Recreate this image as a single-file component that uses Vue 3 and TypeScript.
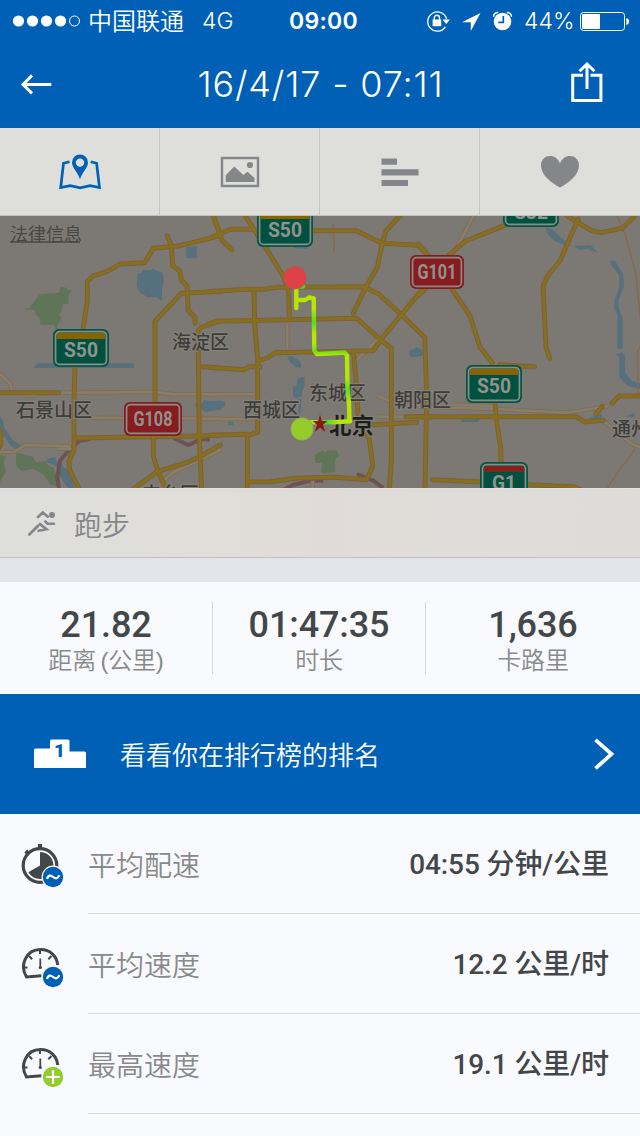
<script setup lang="ts">
type Tile = 0 | 210 | 420
interface Line { tile: Tile; pts: string }
interface Shield { x: number; y: number; w: number; h: number; text: string; kind: 'g' | 'r'; band?: string; size: number }

// Map geometry is digitised per tile at 3 units per pixel.
const trace = (line: Line): string =>
  'M' + line.pts.split(' ').map((p) => {
    const [x, y] = p.split(',').map(Number)
    return `${(x / 3 + line.tile).toFixed(1)} ${(y / 3 + 214).toFixed(1)}`
  }).join('L')

const L = (tile: Tile, ...pts: string[]): string[] => pts.map((p) => trace({ tile, pts: p }))

const majors: string[] = [
  ...L(0,
    '240,830 209,768 207,740 222,708 222,560 225,450 248,350 262,262 262,202 278,187 322,172 360,150 434,146 460,103 540,95 662,65',
    '502,65 514,95 518,155 540,172 544,198 561,216 565,290 585,310 585,328',
    '638,0 662,65',
    '465,560 465,322 544,238 662,232',
    '605,830 598,668 594,350 604,340 662,320',
    '608,458 662,463',
    '-5,536 176,536',
    '225,672 598,666 662,664',
    '460,668 460,725 474,772 495,820',
    '390,832 474,772 560,746 600,728 662,692',
    '-5,640 2,660 2,690 -5,705'),
  ...L(210,
    '-5,74 62,46 130,46', '12,10 35,78 66,108', '105,5 165,98 222,190 236,235 238,310',
    '300,50 440,50 516,88 625,94 665,135',
    '575,0 528,50 516,90 502,160 466,222 430,298',
    '-5,233 110,226 160,226 200,220 460,218 506,240 574,302 644,370 650,540 645,830',
    '-5,330 20,322 440,313 512,378 544,402 544,740 538,830',
    '132,235 134,330 143,440 143,655 112,665 112,830',
    '143,440 172,432 195,416 490,410 512,378 574,302 640,225',
    '-5,460 102,467 118,458 150,458',
    '-5,664 112,661', '430,413 438,500 444,600',
    '112,804 180,803 265,792 375,790 470,797 488,755 478,675 465,655',
    '488,632 620,625', '588,608 665,608'),
  ...L(420,
    '85,125 135,82 270,28', '95,225 150,305 180,400 218,448',
    '440,5 515,50 545,56 608,42 645,5',
    '475,15 420,140 385,182 369,217 378,400 389,433',
    '-5,90 18,115', '-5,245 15,225', '238,452 344,458',
    '-5,608 470,608 492,624 550,619', '224,560 230,625 242,700 243,750',
    '38,797 185,804', '320,812 460,818 490,830',
    '528,600 547,577', '576,568 597,546 662,546'),
]

const minors: string[] = [
  ...L(0, '176,536 465,534 520,541 662,541', '270,611 662,614', '-5,476 30,508 35,530', '-5,714 45,713 77,693 212,697', '172,704 215,704', '475,812 520,775 600,738 662,707', '75,544 105,544'),
  ...L(210, '-5,541 132,541', '-5,615 140,615', '232,330 232,405', '440,438 555,325 630,230', '502,545 555,568 665,580', '500,608 590,608', '0,715 30,700', '308,800 308,830'),
  ...L(420, '163,0 135,55 95,125', '-5,578 210,584 440,596 565,577', '100,572 230,577', '550,620 605,665 635,690 662,700'),
]
const thin: string[] = L(210, '370,30 373,115').concat(L(420,
  '590,5 615,60 648,180 662,320', '662,395 652,415 654,540', '560,825 590,780 645,705'))

const rail: string[] = [
  ...L(0, '178,830 172,790 180,740 210,705 240,680 270,675', '520,672 565,693 605,675 630,677'),
  ...L(210, '220,828 250,812 300,800 340,800', '440,780 490,800 520,822'),
]

const water: string[] = [
  ...L(0, '558,100 590,97 590,133 560,133', '412,180 426,177 428,168 456,168 460,161 465,168 490,177 491,208 486,223 486,262 470,250 440,250 432,242 420,236 410,215',
    '101,462 113,448 403,448 403,462', '0,607 10,620 12,640 40,680 62,692 50,707 30,693 18,675 0,660',
    '137,744 145,733 166,730 170,745 185,744 190,758 205,770 220,805 225,825 205,822 195,810 178,785 175,765 160,752',
    '586,568 605,568 612,558 630,562 662,560 662,580 640,590 615,594 600,582 586,580'),
  ...L(210, '231,428 245,427 265,438 274,450 272,462 255,458 238,442', '262,492 284,488 284,515 276,530 276,545 262,555 250,548 248,518 260,515',
    '0,560 45,562 45,575 28,588 0,590', '254,96 294,96 292,104 254,103', '596,410 610,406 620,398 640,410 638,425 610,430 600,428', '54,622 70,622 70,634 54,634', '265,555 275,555 272,590 266,610'),
  ...L(420, '378,40 395,45 425,72 455,95 440,97 405,82 380,58', '462,95 512,94 535,117 502,105 475,107',
    '569,142 585,140 610,180 612,218 595,260 597,283 608,312 608,405 592,405 592,300 582,285 583,260 598,220 597,182 578,160',
    '588,420 605,415 616,425 615,475 635,500 660,508 660,525 625,517 598,490 598,430', '-5,407 10,407 10,421 -5,421',
    '122,617 180,615 174,624 125,624', '508,612 546,600 545,615 510,617', '614,608 643,597 644,610'),
]
const parks: string[] = [
  ...L(0, '73,286 90,280 118,242 150,238 178,236 181,218 202,222 204,230 216,228 205,245 206,270 190,270 184,294 175,302 187,310 178,322 170,340 180,347 172,355 162,333 122,333 118,308 108,305 105,288',
    '48,716 68,720 98,728 108,745 136,742 145,755 160,760 170,785 178,820 150,810 130,782 100,765 65,770 48,755', '0,722 18,728 10,745 18,770 0,805'),
  ...L(210, '315,722 335,710 348,714 352,708 380,710 388,725 376,735 376,775 334,777 336,748 315,746'),
]

const shields: Shield[] = [
  { x: 257, y: 209, w: 56, h: 38, text: 'S50', kind: 'g', band: '#8a6200', size: 20 },
  { x: 53, y: 329, w: 56, h: 38, text: 'S50', kind: 'g', band: '#8a6200', size: 20 },
  { x: 466, y: 365, w: 56, h: 38, text: 'S50', kind: 'g', band: '#8a6200', size: 20 },
  { x: 503, y: 191, w: 56, h: 36, text: 'S32', kind: 'g', size: 20 },
  { x: 480, y: 462, w: 48, h: 38, text: 'G1', kind: 'g', band: '#84211f', size: 20 },
  { x: 410, y: 255, w: 54, h: 34, text: 'G101', kind: 'r', size: 20 },
  { x: 124, y: 402, w: 58, h: 34, text: 'G108', kind: 'r', size: 20 },
]
const places = [
  { x: 172, y: 349, t: '海淀区' }, { x: 16, y: 417, t: '石景山区' }, { x: 243, y: 417, t: '西城区' },
  { x: 309, y: 400, t: '东城区' }, { x: 394, y: 407, t: '朝阳区' }, { x: 612, y: 436, t: '通州区' }, { x: 142, y: 501, t: '丰台区' },
]

const stats = [
  { value: '21.82', label: '距离 (公里)' },
  { value: '01:47:35', label: '时长' },
  { value: '1,636', label: '卡路里' },
]
const rows = [
  { icon: 'watch', badge: 'avg', label: '平均配速', value: '04:55 分钟/公里' },
  { icon: 'gauge', badge: 'avg', label: '平均速度', value: '12.2 公里/时' },
  { icon: 'gauge', badge: 'max', label: '最高速度', value: '19.1 公里/时' },
]
</script>

<template>
  <div class="app">
    <header class="top">
      <div class="status">
        <div class="left">
          <svg class="dots" width="70" height="14" viewBox="0 0 70 14">
            <g fill="#fff"><circle cx="6.5" cy="7" r="5.6" /><circle cx="20.5" cy="7" r="5.6" /><circle cx="34.5" cy="7" r="5.6" /><circle cx="48.5" cy="7" r="5.6" /></g>
            <circle cx="62.5" cy="7" r="5" fill="none" stroke="#fff" />
          </svg>
          <span class="carrier">中国联通</span><span class="net">4G</span>
        </div>
        <div class="clock">09:00</div>
        <div class="right">
          <svg width="88" height="24" viewBox="426 8 88 24" fill="none" stroke="#fff" stroke-width="1.3">
            <path d="M445.4 25.8A9.6 9.6 0 1 1 446.6 18" />
            <path d="M442.500 18.500h7.500l-3.800 4.400z" fill="#fff" stroke="none" />
            <rect x="432.600" y="18.500" width="8.600" height="6.700" fill="#fff" stroke="none" />
            <path d="M434.300 19v-2.200a2.600 2.600 0 0 1 5.200 0v2.200" stroke-width="1.400" />
            <path d="M480.500 12L462 21.300h8.800v8.700z" fill="#fff" stroke="none" />
            <circle cx="502.500" cy="20.500" r="8.800" fill="#fff" stroke="none" />
            <path d="M503.300 15v6.300h-5" stroke="#0060b6" stroke-width="1.700" />
            <path d="M493.600 15.800a4 4 0 0 1 4.600-4.200M511.400 15.800a4 4 0 0 0-4.600-4.200" stroke-width="1.500" />
          </svg>
          <span class="pct">44%</span>
          <svg width="50" height="20" viewBox="580 10 50 20">
            <rect x="580.500" y="11.500" width="44" height="18" rx="3" fill="none" stroke="#fff" />
            <rect x="582" y="13" width="18" height="15" rx="1" fill="#fff" />
            <path d="M626.300 17c3.700.5 3.700 6.500 0 7z" fill="#fff" />
          </svg>
        </div>
      </div>
      <div class="nav">
        <svg width="32" height="22" viewBox="20 73 32 22" fill="none" stroke="#fff" stroke-width="3"><path d="M51.300 84.400H23M32 75.400l-9 9 9 9" /></svg>
        <h1>16/4/17 - 07:11</h1>
        <svg class="share" width="32" height="42" viewBox="571 61 32 42" fill="none" stroke="#fff" stroke-width="3"><path d="M583 75.300h-10.300V100.500h28.200V75.300H590.500M587 64.500V89M579.500 71.300l7.500-7.300 7.500 7.300" /></svg>
      </div>
    </header>

    <nav class="tabs">
      <div class="tab">
        <svg width="44" height="36" viewBox="58 153 44 36">
          <path d="M69.500 160.700l-6 1.600-2.800 24.200 9.500-1.900 10 2.300 10-2.300 9.300 1.900-2.900-24.200-5.900-1.600" fill="none" stroke="#0060b6" stroke-width="2.700" />
          <path fill-rule="evenodd" d="M80 153.500a8 8 0 0 0-8 8c0 5.500 5.500 9 8 16.800 2.500-7.800 8-11.300 8-16.800a8 8 0 0 0-8-8zm0 3.900a4.200 4.200 0 1 1 0 8.400 4.200 4.200 0 0 1 0-8.400z" fill="#0060b6" />
        </svg>
      </div>
      <div class="tab">
        <svg width="40" height="32" viewBox="220 156 40 32" fill="#858689">
          <rect x="222" y="158" width="36" height="28" fill="none" stroke="#858689" stroke-width="2.400" />
          <circle cx="250" cy="165" r="3.100" /><path d="M225.700 182v-6.800l8.600-8.600 9 8.400 4.200-3.200 7 6.200v4z" />
        </svg>
      </div>
      <div class="tab">
        <svg width="38" height="28" viewBox="381 158 38 28" fill="#858689"><path d="M381.500 158.500h15.500v6.200h-15.500zM381.500 169.200h37v6.200h-37zM381.500 180h26.500v6.200h-26.500z" /></svg>
      </div>
      <div class="tab">
        <svg width="40" height="34" viewBox="540 155 40 34"><path d="M560 187.600C552 183 541 175.500 541 165.500c0-11.500 15.500-13 19-1.800 3.500-11.200 19-9.700 19 1.800 0 10-11 17.500-19 22.100z" fill="#858689" /></svg>
      </div>
    </nav>

    <svg class="map" width="640" height="272" viewBox="0 216 640 272">
      <rect y="216" width="640" height="272" fill="#7c7974" />
      <path v-for="(d, i) in water" :key="'w' + i" :d="d + 'Z'" fill="#56717d" />
      <path v-for="(d, i) in parks" :key="'p' + i" :d="d + 'Z'" fill="#607457" />
      <g fill="none" stroke-linejoin="round">
        <path v-for="(d, i) in thin" :key="'t' + i" :d="d" stroke="#866a4b" stroke-width="1.400" />
        <path v-for="(d, i) in rail" :key="'r' + i" :d="d" stroke="#6b5452" stroke-width="4" />
        <path v-for="(d, i) in minors" :key="'m' + i" :d="d" stroke="#876b4e" stroke-width="4.400" />
        <path v-for="(d, i) in minors" :key="'n' + i" :d="d" stroke="#85806e" stroke-width="2.600" />
        <path v-for="(d, i) in majors" :key="'a' + i" :d="d" stroke="#805f38" stroke-width="4.900" stroke-linecap="round" />
        <path v-for="(d, i) in majors" :key="'b' + i" :d="d" stroke="#85701f" stroke-width="2.900" stroke-linecap="round" />
      </g>
      <g class="place">
        <text v-for="p in places" :key="p.t" :x="p.x" :y="p.y">{{ p.t }}</text>
        <text class="capital" x="329" y="434">北京</text>
      </g>
      <g v-for="(s, i) in shields" :key="'s' + i">
        <rect :x="s.x" :y="s.y" :width="s.w" :height="s.h" rx="6" :fill="s.kind === 'g' ? '#005746' : '#861c1f'" />
        <rect :x="s.x + 2.6" :y="s.y + 2.6" :width="s.w - 5.2" :height="s.h - 5.2" rx="4" :fill="s.kind === 'g' ? '#00513f' : '#861c1f'" stroke="#8b8b87" stroke-width="1.700" />
        <rect v-if="s.band" :x="s.x + 4" :y="s.y + 4" :width="s.w - 8" height="6" :fill="s.band" />
        <text class="code" :x="s.x + s.w / 2" :y="s.kind === 'g' ? s.y + 28 : s.y + 24" :textLength="s.kind === 'r' ? 39 : s.text === 'G1' ? 24 : 34" lengthAdjust="spacingAndGlyphs" :font-size="s.size">{{ s.text }}</text>
      </g>
      <defs>
        <linearGradient id="pace" gradientUnits="userSpaceOnUse" x1="0" y1="280" x2="0" y2="425">
          <stop offset="0" stop-color="#b7e600" /><stop offset=".2" stop-color="#b7e600" /><stop offset=".29" stop-color="#55dc20" /><stop offset=".37" stop-color="#b7e600" /><stop offset=".44" stop-color="#b7e600" /><stop offset=".49" stop-color="#62de1c" /><stop offset=".52" stop-color="#b7e600" /><stop offset=".68" stop-color="#b7e600" /><stop offset=".76" stop-color="#5bdd20" /><stop offset=".84" stop-color="#b7e600" /><stop offset="1" stop-color="#b7e600" />
        </linearGradient>
        <linearGradient id="finish" gradientUnits="userSpaceOnUse" x1="302" y1="0" x2="350" y2="0">
          <stop offset="0" stop-color="#45d827" /><stop offset=".25" stop-color="#b7e600" /><stop offset=".5" stop-color="#45d827" /><stop offset=".75" stop-color="#b7e600" /><stop offset="1" stop-color="#b7e600" />
        </linearGradient>
      </defs>
      <g fill="none" stroke-width="4.400" stroke-linecap="round" stroke-linejoin="round">
        <path d="M295.500 286.500h7.500" stroke="#45d827" />
        <path d="M296.300 285v23M297 300h8l4-2.500 4.800 1v12l.5 40 2.500 3.500 11-.5 17-1 2.200 3 .5 32 1.500 16 .5 17.500" stroke="url(#pace)" />
        <path d="M350 421.300l-16 .9h-31" stroke="url(#finish)" />
      </g>
      <path d="M320 414.800l1.900 6.100h5.300l-4.300 4 2.400 7.200-5.300-4.500-5.300 4.500 2.400-7.200-4.300-4h5.300z" fill="#851b0c" />
      <circle cx="295" cy="277.800" r="11.300" fill="#e04146" stroke="#a65b59" stroke-width=".7" />
      <circle cx="302" cy="429" r="11.200" fill="#96cb2c" stroke="#89a85a" stroke-width=".7" />
      <g class="legal"><text x="10" y="240.500">法律信息</text><rect x="10" y="241.300" width="70" height="1.400" /></g>
    </svg>

    <div class="sport">
      <svg width="30" height="28" viewBox="27 511 30 28" fill="none" stroke="#858689" stroke-width="2.600" stroke-linecap="round">
        <circle cx="52" cy="517" r="3" fill="#858689" stroke="none" />
        <path d="M38 519l4.800-4.500 5 4.200M54 525.700h-6.500l-2.200-2.200M29.300 536.500l8.500-8.500M40 526l6.500 5.300-8 1.400" />
        <path d="M36.500 529.500l3.500-3.500 5 4.800" stroke-width="1.800" />
      </svg>
      <span>跑步</span>
    </div>
    <div class="gap"></div>

    <section class="stats">
      <div v-for="s in stats" :key="s.label" class="stat"><b>{{ s.value }}</b><span>{{ s.label }}</span></div>
    </section>

    <section class="banner">
      <svg width="52" height="30" viewBox="34 740 52 30">
        <path d="M34 769V751a1.500 1.500 0 0 1 1.500-1.500H50V742a1.500 1.500 0 0 1 1.500-1.500H68a1.500 1.500 0 0 1 1.500 1.500v10.500h15a1.500 1.500 0 0 1 1.500 1.500v15z" fill="#fff" />
        <text class="one" x="59.500" y="758">1</text>
      </svg>
      <span>看看你在排行榜的排名</span>
      <svg class="chev" width="22" height="34" viewBox="593 737 22 34" fill="none" stroke="#fff" stroke-width="3.800"><path d="M595.500 739.800l16 14.300-16 14.300" /></svg>
    </section>

    <section class="list">
      <div v-for="r in rows" :key="r.label" class="row">
        <svg width="44" height="46" viewBox="21 843 44 46">
          <g v-if="r.icon === 'watch'">
            <circle cx="40" cy="865.500" r="16.800" fill="none" stroke="#43474a" stroke-width="3.200" />
            <path d="M38 844h4v5h-4zM24.300 852.500l3-3 2 2-3 3z" fill="#43474a" />
            <path d="M40 865.500V852a13.500 13.500 0 1 1-11.700 20.300z" fill="#43474a" />
          </g>
          <g v-else fill="none" stroke="#43474a">
            <path d="M41.500 875.700l-15 1.200c-7-11-1-27.400 14-27.400 10 0 16.500 7 17.200 15.500" stroke-width="3" />
            <path d="M40 850v4M29 856l3.200 3.200M51.500 856l-3.200 3.200M24 867.500h3.500M52.500 867.500H56" stroke-width="2" />
            <path d="M40.300 858.500V867" stroke-width="1.800" /><circle cx="40.300" cy="867.500" r="1.600" fill="#43474a" stroke="none" />
          </g>
          <circle cx="53" cy="877" r="11.400" fill="#f9fafd" />
          <circle cx="53" cy="877" r="10.200" :fill="r.badge === 'avg' ? '#0060b6' : '#93cc2d'" />
          <path v-if="r.badge === 'avg'" d="M47 878.800c1.500-4.300 4-3.600 6.200-1.800s4.600 2.200 6.100-1.800" fill="none" stroke="#fff" stroke-width="2.200" />
          <path v-else d="M53 870.300v13.400M46.300 877h13.400" stroke="#fff" stroke-width="2.200" />
        </svg>
        <div class="cell"><span>{{ r.label }}</span><b>{{ r.value }}</b></div>
      </div>
    </section>
  </div>
</template>

<style>
html, body { background: #f9fafd; overflow: hidden; }
</style>
<style scoped>
.app { width: 640px; height: 1136px; overflow: hidden; background: #f9fafd; font-family: "Liberation Sans", "Noto Sans CJK SC", sans-serif; }
svg { display: block; flex: none; }
.top { height: 128px; background: #0060b6; color: #fff; }
.status { height: 40px; display: grid; grid-template-columns: 1fr 80px 1fr; align-items: center; font: 400 23px/40px Inter, "Noto Sans CJK SC", sans-serif; }
.left, .right { display: flex; align-items: center; height: 40px; }
.dots { margin-left: 12px; }
.carrier { margin: 2px 0 0 6px; font-size: 24px; font-weight: 350; }
.net { margin: 1px 0 0 18px; font-weight: 350; }
.clock { text-align: center; font-weight: 600; letter-spacing: .3px; padding: 1px 0 0 7px; }
.right { justify-content: flex-end; padding-right: 10px; }
.pct { width: 49px; margin: 1px 7px 0 10px; font-weight: 350; white-space: nowrap; }
.nav { height: 88px; display: flex; align-items: center; justify-content: space-between; padding: 0 37px 0 20px; }
.share { margin-top: -4px; }
h1 { margin: -1px 0 0 18px; font: 350 36px/44px Inter, sans-serif; letter-spacing: .85px; }
.tabs { display: grid; grid-template-columns: repeat(4, 160px); height: 87px; background: #dededb; border-bottom: 1px solid #c1c0bd; }
.tab { display: flex; align-items: center; justify-content: center; border-right: 1px solid #c4c4c2; }
.tab:last-child { border-right: 0; }
.place { font: 500 19px "Noto Sans CJK SC", sans-serif; fill: #3d3c3a; stroke: #85827c; stroke-width: 2px; paint-order: stroke; }
.place .capital { font-size: 22.5px; font-weight: 700; fill: #1d1d1c; }
.code { font-family: Roboto, sans-serif; font-weight: 700; fill: #92928e; text-anchor: middle; }
.legal { font: 400 18px "Noto Sans CJK SC", sans-serif; fill: #484744; }
.sport { box-sizing: border-box; height: 70px; display: flex; align-items: center; gap: 17px; padding: 0 0 0 27px; border-top: 1px solid #e3e2df; border-bottom: 1px solid #c3c0bd; background: linear-gradient(90deg, #dededc, #dfded9 33%, #e0dbd8 50%, #dfddd9 70%, #dddcd9); color: #858689; font-size: 28px; font-weight: 350; }
.sport span { margin-top: 1px; }
.gap { height: 24px; background: #e1e5e9; }
.stats { height: 112px; display: grid; grid-template-columns: 213px 213px 214px; align-items: center; }
.stat { height: 72px; display: flex; flex-direction: column; align-items: center; border-right: 1px solid #d6d8db; }
.stat:last-child { border: 0; }
.stat b { font: 500 36px/46px Roboto, sans-serif; letter-spacing: -.1px; color: #43474a; }
.stat span { margin-top: -1px; font-size: 24px; line-height: 28px; font-weight: 350; color: #88898b; letter-spacing: -.2px; word-spacing: -2px; }
.banner { height: 120px; display: flex; align-items: center; background: #0060b6; color: #fff; padding: 0 25px 0 34px; }
.banner span { margin: -2px 0 0 34px; font-size: 26px; font-weight: 350; }
.chev { margin-left: auto; }
.one { font: 900 19px Roboto, sans-serif; fill: #0060b6; text-anchor: middle; }
.row { height: 100px; display: flex; padding-left: 21px; }
.row > svg { margin: 29px 23px 0 0; }
.cell { flex: 1; box-sizing: border-box; height: 100px; border-bottom: 1px solid #d6d8db; display: flex; align-items: center; justify-content: space-between; padding-right: 31px; font-size: 28px; }
.cell span { margin-top: 0; font-weight: 350; color: #88898b; }
.cell b { margin-top: -4px; font-family: Roboto, "Noto Sans CJK SC", sans-serif; font-weight: 500; letter-spacing: -.1px; color: #43474a; }
</style>
